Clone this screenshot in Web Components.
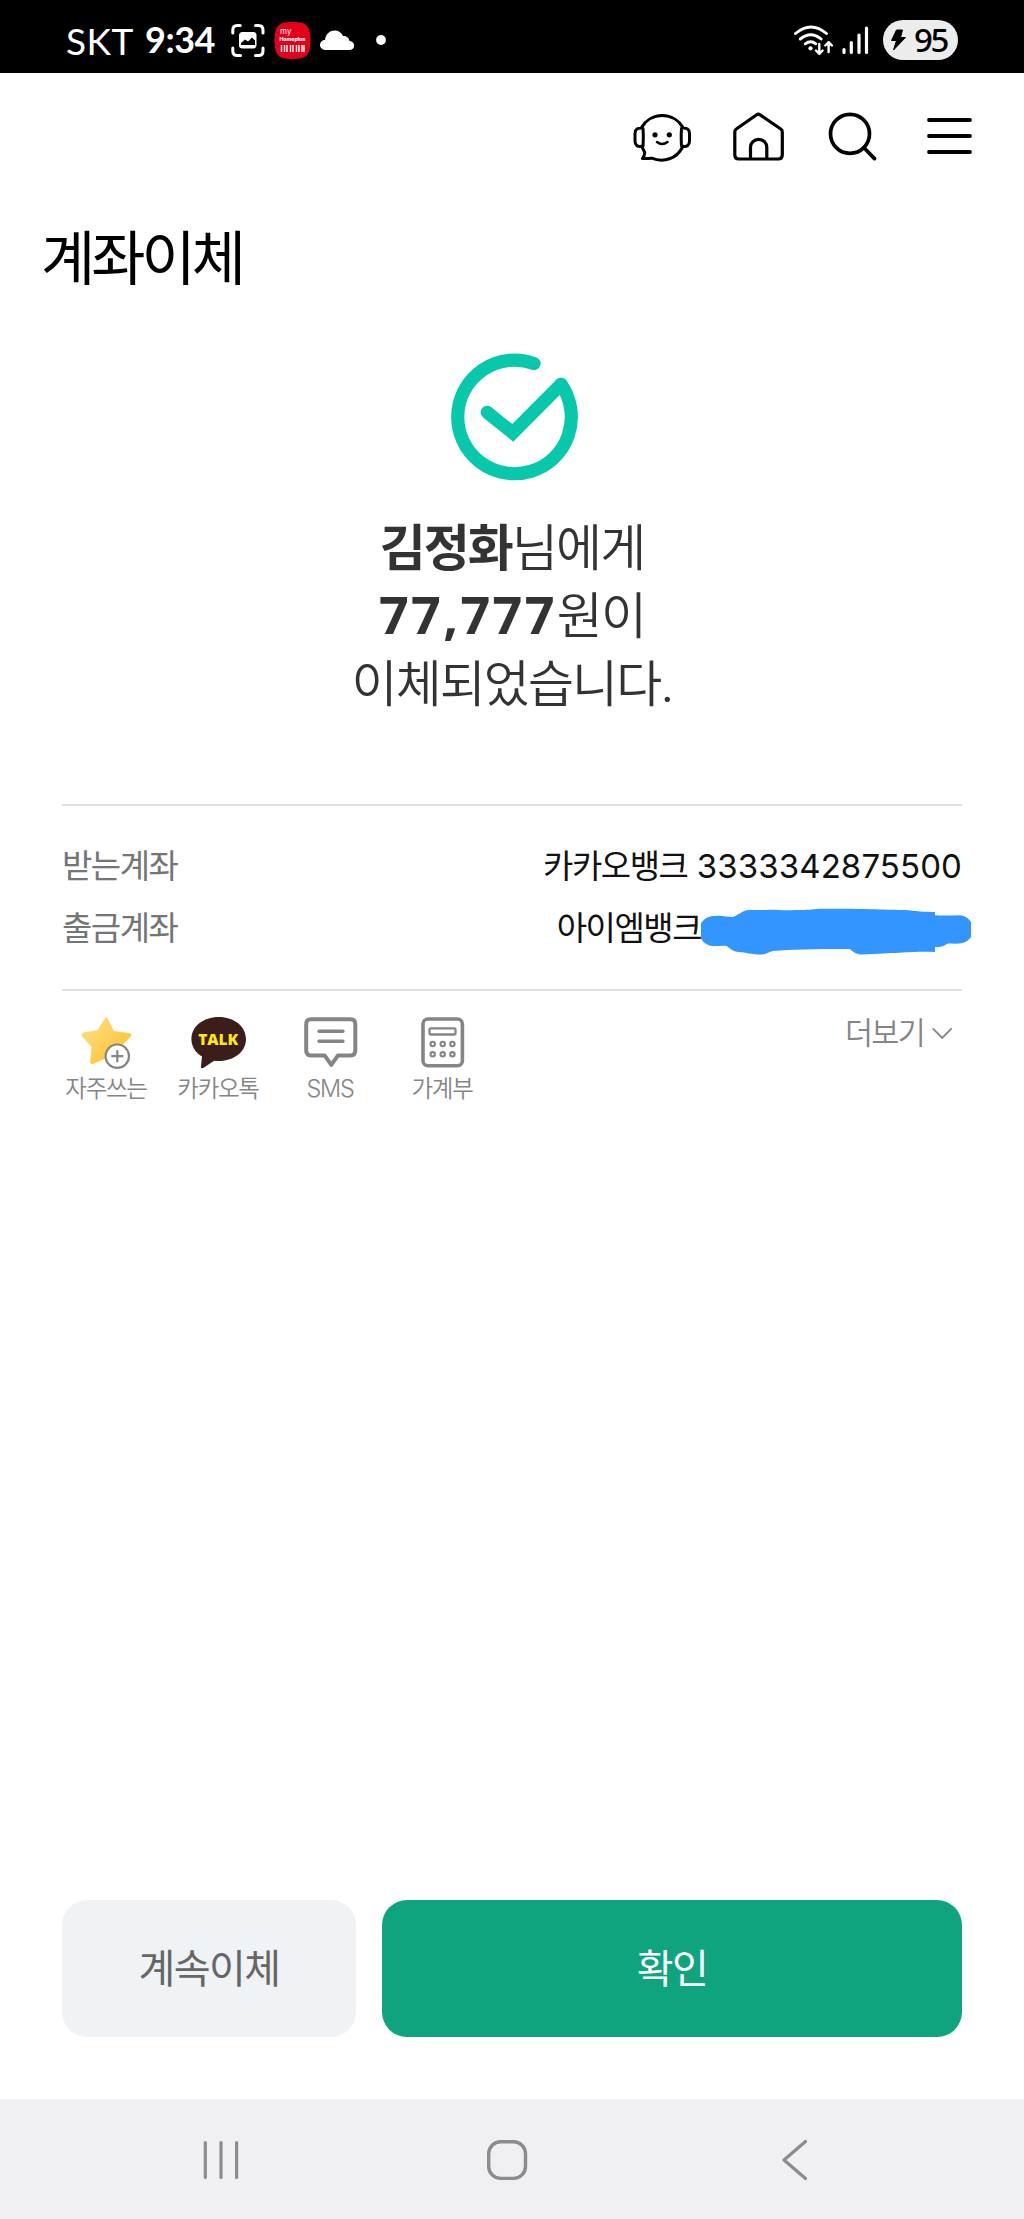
<!DOCTYPE html>
<html lang="ko">
<head>
<meta charset="utf-8">
<title>계좌이체</title>
<style>
html,body{margin:0;padding:0;background:#fff}
body{font-family:Inter,"Noto Sans CJK KR",sans-serif;color:#000;width:1024px;height:2219px;overflow:hidden}
</style>
</head>
<body>
<transfer-screen></transfer-screen>
<script>
const def = (name, html) => customElements.define(name, class extends HTMLElement {
  constructor() {
    super();
    this.attachShadow({mode: 'open'}).innerHTML = html;
  }
});

/* Each icon: [x, y, width, height, markup], drawn in screen coordinates. */
const ICONS = {
  capture: [231, 22, 34, 37, `<g fill="none" stroke="#fff" stroke-width="3" stroke-linecap="round"><path d="M232.8 33v-3q0-4.500 4.500-4.500h3M255.500 25.500h3q4.500 0 4.500 4.500v3M263 48v3q0 4.500-4.500 4.500h-3M240.500 55.500h-3q-4.700 0-4.700-4.500v-3"/></g><rect x="239" y="32" width="17.500" height="16.500" rx="3.500" fill="#fff"/><path d="M241 45v-2l4-3.500 3 2 4-4 3 3v4.500z" fill="#000"/>`],
  homeplus: [274, 21, 38, 39, `<path d="M292.500 22c14 0 18 4 18 18.500s-4 18.500-18 18.500-18-4-18-18.500 4-18.500 18-18.500z" fill="#e2001a"/><g fill="#fff" font-family="Inter,sans-serif"><text x="280" y="34" font-size="8">my</text><text x="279.500" y="41" font-size="5.200" font-weight="800" textLength="26">Homeplus</text></g><path d="M281.500 45v7M284.500 45v7M287 45v7M290.500 45v7M293 45v7M296.500 45v7M299 45v7M302 45v7M304 45v7" stroke="#fff" stroke-width="1.400"/>`],
  cloud: [320, 28, 35, 22, `<path d="M326 49c-3.500 0-6-2.200-6-5 0-3 2.500-5 5-5 .5-5.500 4.500-9.500 9.500-9.500 4 0 7 2 8.500 5.500 4 0 6 2 6.500 5 3 .5 4.700 2.300 4.700 4.500 0 2.800-2 4.500-5 4.500z" fill="#fff"/>`],
  dot: [376, 35, 10, 10, `<circle cx="381" cy="40" r="4.900" fill="#fff"/>`],
  wifi: [792, 22, 42, 36, `<g fill="none" stroke="#fff" stroke-width="2.900" stroke-linecap="round"><path d="M795.500 33.500q15.500-13 31 0M800.300 39q10.500-8.500 20.800 0M805.300 43.800q5.500-4 10.500 0" /></g><circle cx="810.500" cy="48.300" r="2.100" fill="#fff"/><path d="M819.300 44v9.500M816 50.500l3.300 3.300 3.300-3.300M828.600 52v-9.500M825.300 45.500l3.300-3.300 3.300 3.300" fill="none" stroke="#000" stroke-width="5"/><g fill="none" stroke="#fff" stroke-width="2.400" stroke-linecap="round" stroke-linejoin="round"><path d="M819.300 44v9.500M816 50.500l3.300 3.300 3.300-3.300M828.600 52v-9.500M825.300 45.500l3.300-3.300 3.300 3.300"/></g>`],
  signal: [841, 25, 29, 30, `<path d="M844 49.500v3M851.300 42.500v10M859 35v17.500M866.500 28v24.500" stroke="#fff" stroke-width="3.200" stroke-linecap="round"/>`],
  bolt: [890, 28, 17, 24, `<path d="M896.500 30h6l-2 7.500h5l-12 12.500 3-9.500h-5z" fill="#000" stroke="#000" stroke-linejoin="round"/>`],
  assistant: [632, 111, 60, 52, `<g fill="none" stroke="#000" stroke-width="3" stroke-linejoin="round" stroke-linecap="round"><path d="M641.500 127.500a24 24 0 0 1 41.500 0M682.300 147.500c-5.500 11-18.500 15.500-30.500 10.700-3 0-6 .5-9.300.4 1.300-2 2.500-4 2.200-6.300l-2.400-4.800M643 128.300q.6 8.700 0 17.700c-6 1.500-8-1-8-5v-7.500c0-4 2.500-6 8-5.200zM681.500 128.300q-.6 8.700 0 17.700c6 1.500 8-1 8-5v-7.500c0-4-2.500-6-8-5.200z"/><path d="M657 142q5 4 10.500 0" stroke-width="2.500"/></g><circle cx="655" cy="134.800" r="2.600"/><circle cx="669.300" cy="134.800" r="2.600"/>`],
  home: [732, 111, 53, 52, `<path d="M756.300 115q2-1.500 4 0l20.500 14q1.500 1 1.500 3v23q0 4-4 4h-39.500q-4 0-4-4v-23q0-2 1.500-3zM750.500 159v-11.500a8 8 0 0 1 16.300 0v11.500" fill="none" stroke="#000" stroke-width="3.200"/>`],
  search: [827, 111, 50, 52, `<g fill="none" stroke="#000" stroke-width="3.700" stroke-linecap="round"><circle cx="850" cy="133.800" r="19.500"/><path d="M864 147.800l10.500 10.800"/></g>`],
  menu: [925, 111, 49, 52, `<path d="M929 120h41M929 136h41M929 152h41" stroke="#000" stroke-width="3.800" stroke-linecap="round"/>`],
  check: [448, 351, 131, 131, `<g fill="none" stroke="#08c8ac" stroke-width="13.200" stroke-linecap="round"><path d="M534 364.600a56.800 56.800 0 1 0 27 20.700" stroke-linejoin="round"/><path d="M561 385.300l-48.300 48.500-25.500-20.500" stroke-linejoin="miter"/></g>`],
  scribble: [701, 908, 270, 48, `<path d="M715 916c7-1 12 1 17 1 6-1 10-7 17-7h17c10-1 15 1 30 0 20 0 15-1.500 33-1.300 30-.2 60 1 75 1.300 12 1 20 2 31 2v3.300c8 .6 17 0 25 0a14 14 0 0 1-2 28.200c-6 1-9-1-12 1-3 2-5 2.500-11 2.500v5c-20-1-35 1-72 2.500-6 0-9-1.500-13-5.500-20 0-50 0-77 2-5 1-7 3.500-12 3.500-9 0-15-2-22-2.500-5-.5-8-2-12-6-5-1-10 .5-14 0a14.300 14.300 0 0 1 2-30z" fill="#3395ff"/>`],
  star: [80, 1015, 52, 54, `<defs><linearGradient id="g" x1="0" y1="0" x2="1" y2="1"><stop offset="0" stop-color="#ffdf86"/><stop offset="1" stop-color="#fdc028"/></linearGradient></defs><path d="M106.300 1018l7.200 14 16 2q1.500.5.500 2l-11 11.500 2 15.500-14.700-6-13.500 6.200q-2 .3-1.800-2l1.500-14.500-9.500-10.500q-1.500-2 .5-2.700l14.500-2.500z" fill="url(#g)" stroke="url(#g)" stroke-width="1.800" stroke-linejoin="round"/><circle cx="117.300" cy="1056.200" r="11.700" fill="#fff" stroke="#858585" stroke-width="2.200"/><path d="M111.300 1056.200h12M117.300 1050.200v12" stroke="#858585" stroke-width="2.200"/>`],
  talk: [190, 1015, 57, 54, `<path d="M218.700 1017c15.500 0 27.300 9.500 27.300 22s-11.800 22-27.300 22q-3 0-4.500-.2l-11 7.200q-2.700 1-2.200-2l1-9.500c-6.500-4-10.600-10-10.600-17.500 0-12.500 11.800-22 27.300-22z" fill="#3b1d1c"/><text x="198.300" y="1045" font-size="15.500" font-weight="800" font-family="Open Sans,sans-serif" textLength="38.500" fill="#fbe812">TALK</text>`],
  sms: [302, 1015, 56, 54, `<g fill="none" stroke="#858585" stroke-width="4"><path d="M311 1019.300h39.500q4.800 0 4.800 4.800v26.500q0 4.800-4.800 4.800h-12.500l-6.700 9.500-6.700-9.500h-13.600q-4.800 0-4.800-4.800v-26.500q0-4.800 4.800-4.800z" stroke-linejoin="round"/><path d="M319 1031.300h24M319 1041.300h24" stroke-width="3.400" stroke-linecap="round"/></g>`],
  calc: [419, 1015, 47, 54, `<g fill="none" stroke="#858585" stroke-width="3.600"><rect x="423" y="1019" width="39.400" height="46.800" rx="5"/><rect x="429.500" y="1028.300" width="26" height="6.200" rx="1.500" stroke-width="2.300"/><g stroke-width="2.100"><circle cx="432.700" cy="1044" r="2.200"/><circle cx="442.700" cy="1044" r="2.200"/><circle cx="452.400" cy="1044" r="2.200"/><circle cx="432.700" cy="1054.300" r="2.200"/><circle cx="442.700" cy="1054.300" r="2.200"/><circle cx="452.400" cy="1054.300" r="2.200"/></g></g>`],
  chevron: [931, 1025, 22, 14, `<path d="M932.700 1027.300l9.500 9.700 9.500-9.700" fill="none" stroke="#858585" stroke-width="1.800"/>`],
  recents: [203, 2138, 36, 44, `<path d="M205.300 2142.500v35M221 2142.500v35M236.600 2142.500v35" stroke="#8c8c8e" stroke-width="3.200" stroke-linecap="round"/>`],
  homekey: [485, 2138, 44, 44, `<rect x="488.700" y="2141.800" width="36.800" height="36.600" rx="12" fill="none" stroke="#8c8c8e" stroke-width="3.400"/>`],
  back: [780, 2138, 30, 44, `<path d="M805.500 2141.500L784 2160l21.500 18.500" fill="none" stroke="#8c8c8e" stroke-width="3.200" stroke-linecap="round" stroke-linejoin="round"/>`]
};

customElements.define('app-icon', class extends HTMLElement {
  constructor() { super(); this.attachShadow({mode: 'open'}); }
  connectedCallback() {
    const [x, y, w, h, body] = ICONS[this.getAttribute('name')];
    this.shadowRoot.innerHTML = `<style>:host{display:block;flex:none}svg{display:block}</style><svg width="${w}" height="${h}" viewBox="${x} ${y} ${w} ${h}">${body}</svg>`;
  }
});

def('status-bar', `<style>
:host{display:flex;justify-content:space-between;height:73px;background:#000;color:#fff;box-sizing:border-box;padding:0 66px 0 66px;font-family:Lato,sans-serif}
div{display:flex;align-items:center;height:80px}
.net{font-size:37px;width:79px;letter-spacing:.4px}
.time{font-size:36px;font-weight:700;width:86px;letter-spacing:-.5px;padding-bottom:2px}
.bat{background:#ececec;color:#000;width:75px;height:40px;border-radius:20px;margin-left:13px;box-sizing:border-box;padding-left:7px;gap:7px;font-size:33px;font-weight:500;font-family:"Noto Sans",sans-serif;line-height:40px}
.bat span{display:block;letter-spacing:-2.400px}
</style><div><span class="net">SKT</span><span class="time">9:34</span><app-icon name="capture"></app-icon><app-icon name="homeplus" style="margin-left:9px"></app-icon><app-icon name="cloud" style="margin-left:8px"></app-icon><app-icon name="dot" style="margin-left:21px"></app-icon></div>
<div><app-icon name="wifi"></app-icon><app-icon name="signal" style="margin-left:7px"></app-icon><div class="bat"><app-icon name="bolt"></app-icon><span>95</span></div></div>`);

def('app-header', `<style>
:host{display:block}
nav{display:flex;justify-content:flex-end;padding:38px 50px 0 0}
h1{margin:56px 0 0 41px;font-weight:400;font-size:59px;line-height:80px;letter-spacing:-4px}
</style><nav><app-icon name="assistant"></app-icon><app-icon name="home" style="margin-left:40px"></app-icon><app-icon name="search" style="margin-left:42px"></app-icon><app-icon name="menu" style="margin-left:48px"></app-icon></nav><h1><slot></slot></h1>`);

def('transfer-result', `<style>
:host{display:flex;flex-direction:column;align-items:center;padding-top:51px;color:#333}
app-icon{margin-left:2px}
p{margin:33px 0 0;text-align:center;font-size:50px;line-height:68px;font-weight:350;letter-spacing:-1.900px}
</style><app-icon name="check"></app-icon><p><slot></slot></p>`);

def('detail-list', `<style>
:host{display:block;margin:86px 62px 0;border-top:2px solid #e0e0e0;border-bottom:2px solid #e0e0e0;padding:29px 0 30px;}
</style><slot></slot>`);

def('detail-row', `<style>
:host{display:flex;justify-content:space-between;align-items:center;height:62px;font-size:33px;line-height:62px;letter-spacing:-1.500px;color:#111}
.l{color:#757575}
.v{display:flex;align-items:center}
</style><span class="l"><slot name="label"></slot></span><span class="v"><slot></slot></span>`);

def('share-item', `<style>
:host{display:flex;flex-direction:column;align-items:center;width:112px;font-size:23.500px;line-height:40px;letter-spacing:-1.300px;color:#858585;font-weight:350}
</style><slot name="icon"></slot><span><slot></slot></span>`);

def('share-bar', `<style>
:host{display:flex;justify-content:space-between;margin:24px 62px 0 50px;align-items:flex-start}
.items{display:flex}
.more{display:flex;align-items:center;gap:7px;font-size:30.500px;line-height:36px;letter-spacing:-1.700px;color:#858585;font-weight:350;margin-right:9px}
</style><div class="items"><slot></slot></div><div class="more"><slot name="more"></slot><app-icon name="chevron"></app-icon></div>`);

def('app-button', `<style>
:host{display:flex;align-items:center;justify-content:center;height:137px;border-radius:25px;background:#eff3f5;color:#666;font-size:40px;line-height:60px;letter-spacing:-1.500px;width:294px}
:host([primary]){background:#0da47e;color:#fff;width:580px}
</style><slot></slot>`);

def('system-nav', `<style>
:host{display:flex;height:120px;background:#f0f0f2;align-items:center;box-sizing:border-box;padding:2px 0 0 203px}
</style><app-icon name="recents"></app-icon><app-icon name="homekey" style="margin-left:246px"></app-icon><app-icon name="back" style="margin-left:251px"></app-icon>`);

def('transfer-screen', `<style>
:host{display:flex;flex-direction:column;width:1024px;height:2219px;background:#fff}
.actions{display:flex;justify-content:space-between;margin:auto 62px 62px}
b{font-weight:700}
.amount{font-family:"Noto Sans",sans-serif;font-size:52px;line-height:0;letter-spacing:2.400px}
.num{letter-spacing:.1px;white-space:pre}
</style>
<status-bar></status-bar>
<app-header>계좌이체</app-header>
<transfer-result><b>김정화</b>님에게<br><b class="amount">77,777</b>원이<br>이체되었습니다.</transfer-result>
<detail-list>
<detail-row><span slot="label">받는계좌</span><span>카카오뱅크</span><span class="num"> 3333342875500</span></detail-row>
<detail-row><span slot="label">출금계좌</span><span>아이엠뱅크</span><app-icon name="scribble" style="margin:8px -9px 0 0"></app-icon></detail-row>
</detail-list>
<share-bar>
<share-item><app-icon slot="icon" name="star"></app-icon>자주쓰는</share-item>
<share-item><app-icon slot="icon" name="talk"></app-icon>카카오톡</share-item>
<share-item><app-icon slot="icon" name="sms"></app-icon>SMS</share-item>
<share-item><app-icon slot="icon" name="calc"></app-icon>가계부</share-item>
<span slot="more">더보기</span>
</share-bar>
<div class="actions"><app-button>계속이체</app-button><app-button primary>확인</app-button></div>
<system-nav></system-nav>`);
</script>
</body>
</html>
